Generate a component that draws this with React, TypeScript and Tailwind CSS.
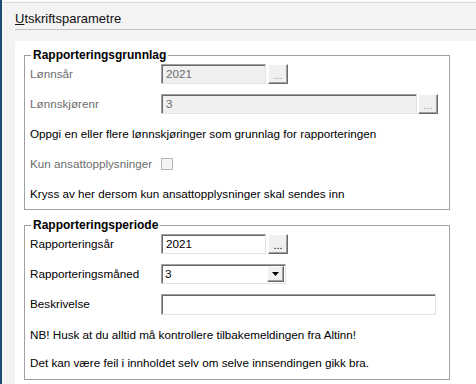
import React from "react";

const font = { fontFamily: '"Liberation Sans", Arial, sans-serif' };

function Dots({ disabled }: { disabled?: boolean }) {
  return (
    <div
      className={`w-[20px] h-[20px] bg-[#f0f0f0] border border-t-white border-l-white border-r-[#696969] border-b-[#696969] shadow-[inset_-1px_-1px_0_#a0a0a0] flex items-end justify-center pb-[2px] text-[11px] leading-none ${
        disabled ? "text-[#a0a0a0]" : "text-black"
      }`}
    >
      ...
    </div>
  );
}

function Input({
  width,
  value,
  disabled,
  h = 20,
}: {
  width: string;
  value?: string;
  disabled?: boolean;
  h?: number;
}) {
  return (
    <div
      className={`${width} ${h === 21 ? "h-[21px]" : "h-[20px]"} border border-t-[#a0a0a0] border-l-[#a0a0a0] border-r-[#e3e3e3] border-b-[#e3e3e3] shadow-[inset_1px_1px_0_#696969] flex items-center pl-[4px] text-[11.7px] ${
        disabled ? "bg-[#f0f0f0] text-[#6d6d6d]" : "bg-white text-black"
      }`}
    >
      {value}
    </div>
  );
}

function Row({ children, className = "" }: { children: React.ReactNode; className?: string }) {
  return <div className={`h-[22px] flex items-center ${className}`}>{children}</div>;
}

function Label({ children, disabled }: { children: React.ReactNode; disabled?: boolean }) {
  return (
    <div className={`w-[131px] shrink-0 text-[11.7px] ${disabled ? "text-[#6d6d6d]" : "text-black"}`}>
      {children}
    </div>
  );
}

export default function App() {
  return (
    <div className="w-[476px] h-[384px] bg-[#f3f3f3] flex overflow-hidden" style={font}>
      <div className="w-[2px] bg-[#1e4a72] shrink-0" />
      <div className="flex-1 flex flex-col">
        <div className="h-[2px] bg-[#fafafa]" />
        <div className="h-[1px] bg-[#d8d8d8]" />
        <div className="ml-[13px] h-[27px] border-b border-[#c4c4c4] flex items-center text-[13px] text-[#111] pt-[6px]">
          <span>
            <span className="underline">U</span>tskriftsparametre
          </span>
        </div>
        <div className="h-[11px]" />
        <div className="ml-[13px] flex-1 bg-white flex flex-col">
          <fieldset className="ml-[9px] w-[426px] mt-[7px] border border-[#a0a0a0] pl-[5px] pb-[4px]">
            <legend className="ml-[1px] px-[2px] text-[12px] font-bold leading-[15px] text-black">
              Rapporteringsgrunnlag
            </legend>
            <div className="flex flex-col gap-[8px]">
              <Row>
                <Label disabled>Lønnsår</Label>
                <Input width="w-[105px]" value="2021" disabled />
                <div className="ml-[2px]">
                  <Dots disabled />
                </div>
              </Row>
              <Row>
                <Label disabled>Lønnskjørenr</Label>
                <Input width="w-[256px]" value="3" disabled />
                <div className="ml-[1px]">
                  <Dots disabled />
                </div>
              </Row>
              <Row>
                <div className="text-[11.7px] text-black">
                  Oppgi en eller flere lønnskjøringer som grunnlag for rapporteringen
                </div>
              </Row>
              <Row>
                <Label disabled>Kun ansattopplysninger</Label>
                <div className="w-[12px] h-[12px] border border-[#b4b4b4] bg-[#f4f4f4]" />
              </Row>
              <Row>
                <div className="text-[11.7px] text-black">
                  Kryss av her dersom kun ansattopplysninger skal sendes inn
                </div>
              </Row>
            </div>
          </fieldset>
          <fieldset className="ml-[9px] w-[426px] mt-[8px] border border-[#a0a0a0] pl-[5px] pb-[5px]">
            <legend className="ml-[1px] px-[2px] text-[12px] font-bold leading-[15px] text-black">
              Rapporteringsperiode
            </legend>
            <div className="flex flex-col">
              <Row>
                <Label>Rapporteringsår</Label>
                <Input width="w-[105px]" value="2021" />
                <div className="ml-[2px]">
                  <Dots />
                </div>
              </Row>
              <Row className="mt-[8px]">
                <Label>Rapporteringsmåned</Label>
                <div className="w-[125px] h-[20px] border border-t-[#a0a0a0] border-l-[#a0a0a0] border-r-[#e3e3e3] border-b-[#e3e3e3] shadow-[inset_1px_1px_0_#696969] bg-white flex items-center text-[11.7px] text-black">
                  <span className="flex-1 pl-[3px]">3</span>
                  <div className="w-[17px] h-[16px] mr-[1px] bg-[#f0f0f0] border border-t-white border-l-white border-r-[#696969] border-b-[#696969] shadow-[inset_-1px_-1px_0_#a0a0a0] flex items-center justify-center">
                    <svg width="7" height="4" viewBox="0 0 7 4">
                      <path d="M0 0h7L3.5 4z" fill="#000" />
                    </svg>
                  </div>
                </div>
              </Row>
              <Row className="mt-[8px]">
                <Label>Beskrivelse</Label>
                <Input width="w-[275px]" h={21} />
              </Row>
              <Row className="mt-[9px]">
                <div className="text-[11.7px] text-black">
                  NB! Husk at du alltid må kontrollere tilbakemeldingen fra Altinn!
                </div>
              </Row>
              <Row className="mt-[6px]">
                <div className="text-[11.7px] text-black">
                  Det kan være feil i innholdet selv om selve innsendingen gikk bra.
                </div>
              </Row>
            </div>
          </fieldset>
        </div>
      </div>
    </div>
  );
}
